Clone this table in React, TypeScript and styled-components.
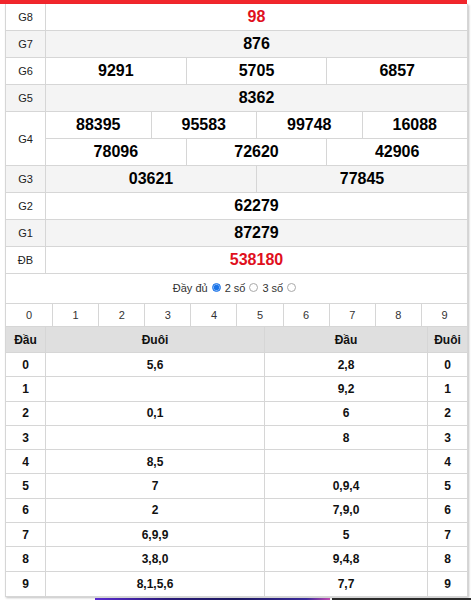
import React from "react";
import styled, { createGlobalStyle } from "styled-components";

const Global = createGlobalStyle`
  html, body { margin: 0; padding: 0; background: #fff; }
  body { font-family: "Liberation Sans", Arial, sans-serif; color: #000; }
`;

const Page = styled.div`
  width: 471px;
  display: flex;
  flex-direction: column;
`;

const TopBar = styled.div`
  width: 467px;
  height: 4px;
  background: #f1262c;
`;

const Card = styled.div`
  margin-left: 5px;
  width: 463px;
  box-sizing: border-box;
  border-left: 1px solid #d6d6d6;
  border-right: 1px solid #d6d6d6;
  border-bottom: 1px solid #d6d6d6;
  box-shadow: 1px 1px 2px rgba(0, 0, 0, 0.25);
  display: flex;
  flex-direction: column;
`;

const PrizeRow = styled.div<{ $alt?: boolean; $h?: number }>`
  display: grid;
  grid-template-columns: 40px 1fr;
  height: ${(p) => p.$h ?? 27}px;
  box-sizing: border-box;
  border-bottom: 1px solid #d6d6d6;
  background: ${(p) => (p.$alt ? "#f4f4f4" : "#fff")};
`;

const Label = styled.div`
  display: flex;
  align-items: center;
  justify-content: center;
  border-right: 1px solid #d6d6d6;
  font-size: 11px;
  color: #222;
`;

const Values = styled.div`
  display: flex;
  flex-direction: column;
`;

const Line = styled.div<{ $divided?: boolean }>`
  flex: 1;
  display: flex;
  box-sizing: border-box;
  border-bottom: ${(p) => (p.$divided ? "1px solid #d6d6d6" : "none")};
`;

const Num = styled.div<{ $red?: boolean }>`
  flex: 1;
  display: flex;
  align-items: center;
  justify-content: center;
  font-size: 16px;
  font-weight: bold;
  color: ${(p) => (p.$red ? "#e0101d" : "#000")};
  & + & {
    border-left: 1px solid #d6d6d6;
  }
`;

const Options = styled.div`
  height: 30px;
  box-sizing: border-box;
  border-bottom: 1px solid #d6d6d6;
  display: flex;
  align-items: center;
  justify-content: center;
  font-size: 11px;
  color: #333;
  padding-bottom: 2px;
`;

const OptText = styled.span`
  margin-right: 3px;
`;

const Radio = styled.span<{ $on?: boolean }>`
  width: 9px;
  height: 9px;
  box-sizing: border-box;
  border-radius: 50%;
  margin: 0 4px 0 1px;
  border: 1px solid ${(p) => (p.$on ? "#1a73e8" : "#a9a9a9")};
  background: ${(p) =>
    p.$on ? "radial-gradient(circle, #1a73e8 0 2.2px, #7fb2f5 3px)" : "#fff"};
`;

const Digits = styled.div`
  display: grid;
  grid-template-columns: repeat(10, 1fr);
  height: 23px;
  box-sizing: border-box;
  border-bottom: 1px solid #d6d6d6;
`;

const Digit = styled.div`
  display: flex;
  align-items: center;
  justify-content: center;
  font-size: 11px;
  color: #333;
  & + & {
    border-left: 1px solid #d6d6d6;
  }
`;

const LotoRow = styled.div<{ $head?: boolean }>`
  display: grid;
  grid-template-columns: 40px 219px 163px 1fr;
  height: ${(p) => (p.$head ? "26px" : "24.3px")};
  box-sizing: border-box;
  border-bottom: 1px solid #d6d6d6;
  background: ${(p) => (p.$head ? "#dfdfdf" : "#fff")};
  &:last-child {
    border-bottom: none;
  }
`;

const LotoCell = styled.div<{ $head?: boolean }>`
  display: flex;
  align-items: center;
  justify-content: center;
  font-size: 12px;
  font-weight: bold;
  color: #111;
  border-right: 1px solid #d6d6d6;
  &:last-child {
    border-right: none;
  }
`;

const BannerStrip = styled.div`
  margin-top: 1px;
  height: 4px;
  display: flex;
`;

const BannerGap = styled.div<{ $w: number }>`
  width: ${(p) => p.$w}px;
`;

const BannerImg = styled.div<{ $w: number; $bg: string }>`
  width: ${(p) => p.$w}px;
  background: ${(p) => p.$bg};
`;

type Prize = { label: string; lines: string[][]; red?: boolean };

const prizes: Prize[] = [
  { label: "G8", lines: [["98"]], red: true },
  { label: "G7", lines: [["876"]] },
  { label: "G6", lines: [["9291", "5705", "6857"]] },
  { label: "G5", lines: [["8362"]] },
  { label: "G4", lines: [["88395", "95583", "99748", "16088"], ["78096", "72620", "42906"]] },
  { label: "G3", lines: [["03621", "77845"]] },
  { label: "G2", lines: [["62279"]] },
  { label: "G1", lines: [["87279"]] },
  { label: "ĐB", lines: [["538180"]], red: true },
];

const loto: [string, string, string, string][] = [
  ["0", "5,6", "2,8", "0"],
  ["1", "", "9,2", "1"],
  ["2", "0,1", "6", "2"],
  ["3", "", "8", "3"],
  ["4", "8,5", "", "4"],
  ["5", "7", "0,9,4", "5"],
  ["6", "2", "7,9,0", "6"],
  ["7", "6,9,9", "5", "7"],
  ["8", "3,8,0", "9,4,8", "8"],
  ["9", "8,1,5,6", "7,7", "9"],
];

export default function App() {
  return (
    <Page>
      <Global />
      <TopBar />
      <Card>
        {prizes.map((p, i) => (
          <PrizeRow key={p.label} $alt={i % 2 === 1} $h={i === 0 ? 27 : 27 * p.lines.length}>
            <Label>{p.label}</Label>
            <Values>
              {p.lines.map((line, j) => (
                <Line key={j} $divided={j < p.lines.length - 1}>
                  {line.map((n) => (
                    <Num key={n} $red={p.red}>
                      {n}
                    </Num>
                  ))}
                </Line>
              ))}
            </Values>
          </PrizeRow>
        ))}
        <Options>
          <OptText>Đầy đủ</OptText>
          <Radio $on />
          <OptText>2 số</OptText>
          <Radio />
          <OptText>3 số</OptText>
          <Radio />
        </Options>
        <Digits>
          {Array.from({ length: 10 }, (_, i) => (
            <Digit key={i}>{i}</Digit>
          ))}
        </Digits>
        <LotoRow $head>
          <LotoCell>Đầu</LotoCell>
          <LotoCell>Đuôi</LotoCell>
          <LotoCell>Đầu</LotoCell>
          <LotoCell>Đuôi</LotoCell>
        </LotoRow>
        {loto.map((r) => (
          <LotoRow key={r[0]}>
            {r.map((c, k) => (
              <LotoCell key={k}>{c}</LotoCell>
            ))}
          </LotoRow>
        ))}
      </Card>
      <BannerStrip>
        <BannerGap $w={95} />
        <BannerImg $w={235} $bg="linear-gradient(90deg,#5a2bd0,#2a1a7a 30%,#1c1860 60%,#3a2a9a 90%,#c04ab0)" />
        <BannerGap $w={2} />
        <BannerImg $w={139} $bg="#2b2b2b" />
      </BannerStrip>
    </Page>
  );
}
